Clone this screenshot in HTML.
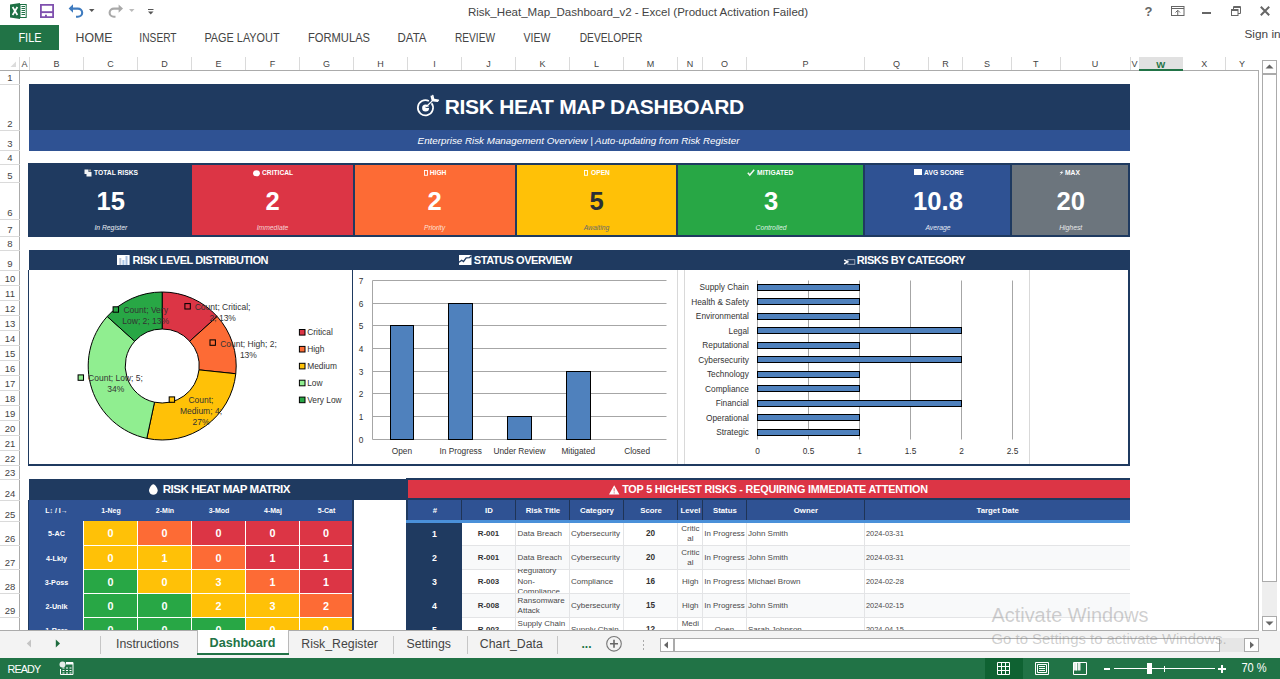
<!DOCTYPE html><html><head><meta charset="utf-8"><style>
*{margin:0;padding:0;box-sizing:border-box}
html,body{width:1280px;height:679px;overflow:hidden;background:#fff;font-family:"Liberation Sans",sans-serif}
.a{position:absolute}
.t{white-space:pre;line-height:1}
svg{position:absolute;overflow:visible}
</style></head><body>
<svg style="left:10px;top:3px" width="17" height="16" viewBox="0 0 17 16">
<path d="M0 1.5 L10 0 L10 16 L0 14.5 Z" fill="#1d7044"/>
<rect x="10" y="1.5" width="6.2" height="13" fill="#fff" stroke="#1d7044" stroke-width="1"/>
<path d="M11.5 3.5h3.5M11.5 5.5h3.5M11.5 7.5h3.5M11.5 9.5h3.5M11.5 11.5h3.5" stroke="#1d7044" stroke-width="1.1"/>
<path d="M2.6 4 L7.4 12 M7.4 4 L2.6 12" stroke="#fff" stroke-width="1.7"/>
</svg>
<svg style="left:40px;top:4px" width="14" height="14" viewBox="0 0 14 14">
<path d="M0.9 0.9 H13.1 V13.1 H0.9 Z" fill="none" stroke="#7f50ae" stroke-width="1.8"/>
<rect x="0" y="7.2" width="14" height="1.9" fill="#7f50ae"/>
<rect x="5" y="10.7" width="1.9" height="2.4" fill="#7f50ae"/>
</svg>
<svg style="left:68px;top:3px" width="16" height="15" viewBox="0 0 16 15">
<path d="M3 5.6 H9.8 A4.4 4.1 0 0 1 9.8 13.8 H8" fill="none" stroke="#3f7bbf" stroke-width="2.1"/>
<path d="M0.6 5.5 L5 1.3 L5 9.7 Z" fill="#3f7bbf"/>
</svg>
<svg style="left:89px;top:9px" width="6" height="4"><path d="M0 0h5.5l-2.75 3z" fill="#555"/></svg>
<svg style="left:108px;top:3px" width="16" height="15" viewBox="0 0 16 15">
<path d="M12.5 5.6 H6 A4.4 4.1 0 0 0 6 13.8 H7.5" fill="none" stroke="#a9a9a9" stroke-width="2.1"/>
<path d="M15 5.6 L10.6 1.4 L10.6 9.8 Z" fill="#a9a9a9"/>
</svg>
<svg style="left:129px;top:9px" width="6" height="4"><path d="M0 0h5.5l-2.75 3z" fill="#bbb"/></svg>
<svg style="left:148px;top:8px" width="6" height="8"><rect x="0" y="1" width="5.5" height="1" fill="#555"/><path d="M0 3.5h5.5l-2.75 3z" fill="#555"/></svg>
<div class="a t" style="top:7.42px;font-size:11.55px;color:#444;font-weight:normal;font-style:normal;left:238px;width:800px;text-align:center;">Risk_Heat_Map_Dashboard_v2 - Excel (Product Activation Failed)</div>
<div class="a t" style="top:5.00px;font-size:13px;color:#666;font-weight:bold;font-style:normal;left:748.5999999999999px;width:800px;text-align:center;">?</div>
<svg style="left:1171px;top:6px" width="14" height="10" viewBox="0 0 14 10">
<rect x="0.5" y="0.5" width="12.5" height="9" fill="none" stroke="#666" stroke-width="1"/>
<path d="M0.5 2.5h12.5" stroke="#666" stroke-width="1"/>
<path d="M6.75 9.5V4.5M4.5 6.5l2.25-2.25 2.25 2.25" fill="none" stroke="#666" stroke-width="1"/>
</svg>
<div class="a" style="left:1202px;top:12px;width:9px;height:2px;background:#666;"></div>
<svg style="left:1231px;top:6px" width="10" height="10" viewBox="0 0 10 10">
<rect x="0.5" y="3.5" width="6.5" height="6" fill="none" stroke="#666" stroke-width="1"/>
<path d="M2.5 3.5V0.5H9.5V7.5H7" fill="none" stroke="#666" stroke-width="1"/>
<path d="M0.5 4.5h6.5M2.5 1.5h7" stroke="#666" stroke-width="1"/>
</svg>
<svg style="left:1260px;top:6px" width="10" height="10" viewBox="0 0 10 10">
<path d="M0.8 0.8L9.2 9.2M9.2 0.8L0.8 9.2" stroke="#666" stroke-width="2"/>
</svg>
<div class="a" style="left:0px;top:25px;width:59px;height:24.5px;background:#217346;"></div>
<div class="a t" style="top:32.27px;font-size:12.2px;color:#fff;font-weight:normal;font-style:normal;left:-370.5px;width:800px;text-align:center;transform:scaleX(0.9);transform-origin:50% 50%;">FILE</div>
<div class="a t" style="top:32.27px;font-size:12.2px;color:#444;font-weight:normal;font-style:normal;left:-306.35px;width:800px;text-align:center;transform:scaleX(1.0088);transform-origin:50% 50%;">HOME</div>
<div class="a t" style="top:32.27px;font-size:12.2px;color:#444;font-weight:normal;font-style:normal;left:-242.0px;width:800px;text-align:center;transform:scaleX(0.8372);transform-origin:50% 50%;">INSERT</div>
<div class="a t" style="top:32.27px;font-size:12.2px;color:#444;font-weight:normal;font-style:normal;left:-157.65px;width:800px;text-align:center;transform:scaleX(0.8928);transform-origin:50% 50%;">PAGE LAYOUT</div>
<div class="a t" style="top:32.27px;font-size:12.2px;color:#444;font-weight:normal;font-style:normal;left:-61.35000000000002px;width:800px;text-align:center;transform:scaleX(0.9167);transform-origin:50% 50%;">FORMULAS</div>
<div class="a t" style="top:32.27px;font-size:12.2px;color:#444;font-weight:normal;font-style:normal;left:12.049999999999955px;width:800px;text-align:center;transform:scaleX(0.9414);transform-origin:50% 50%;">DATA</div>
<div class="a t" style="top:32.27px;font-size:12.2px;color:#444;font-weight:normal;font-style:normal;left:75.05000000000001px;width:800px;text-align:center;transform:scaleX(0.8319);transform-origin:50% 50%;">REVIEW</div>
<div class="a t" style="top:32.27px;font-size:12.2px;color:#444;font-weight:normal;font-style:normal;left:137.45000000000005px;width:800px;text-align:center;transform:scaleX(0.8613);transform-origin:50% 50%;">VIEW</div>
<div class="a t" style="top:32.27px;font-size:12.2px;color:#444;font-weight:normal;font-style:normal;left:211.04999999999995px;width:800px;text-align:center;transform:scaleX(0.8397);transform-origin:50% 50%;">DEVELOPER</div>
<div class="a t" style="top:29.01px;font-size:11.8px;color:#444;font-weight:normal;font-style:normal;left:1244.5px;">Sign in</div>
<div class="a" style="left:0px;top:70px;width:1258.5px;height:1px;background:#ababab;"></div>
<div class="a" style="left:19px;top:57px;width:1px;height:13px;background:#dadada;"></div>
<svg style="left:10px;top:61px" width="8" height="8"><path d="M6 0.5 L6 6 L0.5 6 Z" fill="#dcdcdc"/></svg>
<div class="a" style="left:29.0px;top:57px;width:1px;height:13px;background:#dadada;"></div>
<div class="a t" style="top:59.98px;font-size:9px;color:#444;font-weight:normal;font-style:normal;left:-375.5px;width:800px;text-align:center;">A</div>
<div class="a" style="left:83.0px;top:57px;width:1px;height:13px;background:#dadada;"></div>
<div class="a t" style="top:59.98px;font-size:9px;color:#444;font-weight:normal;font-style:normal;left:-343.5px;width:800px;text-align:center;">B</div>
<div class="a" style="left:137.0px;top:57px;width:1px;height:13px;background:#dadada;"></div>
<div class="a t" style="top:59.98px;font-size:9px;color:#444;font-weight:normal;font-style:normal;left:-289.5px;width:800px;text-align:center;">C</div>
<div class="a" style="left:191.0px;top:57px;width:1px;height:13px;background:#dadada;"></div>
<div class="a t" style="top:59.98px;font-size:9px;color:#444;font-weight:normal;font-style:normal;left:-235.5px;width:800px;text-align:center;">D</div>
<div class="a" style="left:245.0px;top:57px;width:1px;height:13px;background:#dadada;"></div>
<div class="a t" style="top:59.98px;font-size:9px;color:#444;font-weight:normal;font-style:normal;left:-181.5px;width:800px;text-align:center;">E</div>
<div class="a" style="left:299.0px;top:57px;width:1px;height:13px;background:#dadada;"></div>
<div class="a t" style="top:59.98px;font-size:9px;color:#444;font-weight:normal;font-style:normal;left:-127.5px;width:800px;text-align:center;">F</div>
<div class="a" style="left:353.0px;top:57px;width:1px;height:13px;background:#dadada;"></div>
<div class="a t" style="top:59.98px;font-size:9px;color:#444;font-weight:normal;font-style:normal;left:-73.5px;width:800px;text-align:center;">G</div>
<div class="a" style="left:407.0px;top:57px;width:1px;height:13px;background:#dadada;"></div>
<div class="a t" style="top:59.98px;font-size:9px;color:#444;font-weight:normal;font-style:normal;left:-19.5px;width:800px;text-align:center;">H</div>
<div class="a" style="left:461.0px;top:57px;width:1px;height:13px;background:#dadada;"></div>
<div class="a t" style="top:59.98px;font-size:9px;color:#444;font-weight:normal;font-style:normal;left:34.5px;width:800px;text-align:center;">I</div>
<div class="a" style="left:515.0px;top:57px;width:1px;height:13px;background:#dadada;"></div>
<div class="a t" style="top:59.98px;font-size:9px;color:#444;font-weight:normal;font-style:normal;left:88.5px;width:800px;text-align:center;">J</div>
<div class="a" style="left:569.0px;top:57px;width:1px;height:13px;background:#dadada;"></div>
<div class="a t" style="top:59.98px;font-size:9px;color:#444;font-weight:normal;font-style:normal;left:142.5px;width:800px;text-align:center;">K</div>
<div class="a" style="left:623.0px;top:57px;width:1px;height:13px;background:#dadada;"></div>
<div class="a t" style="top:59.98px;font-size:9px;color:#444;font-weight:normal;font-style:normal;left:196.5px;width:800px;text-align:center;">L</div>
<div class="a" style="left:677.0px;top:57px;width:1px;height:13px;background:#dadada;"></div>
<div class="a t" style="top:59.98px;font-size:9px;color:#444;font-weight:normal;font-style:normal;left:250.5px;width:800px;text-align:center;">M</div>
<div class="a" style="left:702.0px;top:57px;width:1px;height:13px;background:#dadada;"></div>
<div class="a t" style="top:59.98px;font-size:9px;color:#444;font-weight:normal;font-style:normal;left:290.0px;width:800px;text-align:center;">N</div>
<div class="a" style="left:746.0px;top:57px;width:1px;height:13px;background:#dadada;"></div>
<div class="a t" style="top:59.98px;font-size:9px;color:#444;font-weight:normal;font-style:normal;left:324.5px;width:800px;text-align:center;">O</div>
<div class="a" style="left:864.0px;top:57px;width:1px;height:13px;background:#dadada;"></div>
<div class="a t" style="top:59.98px;font-size:9px;color:#444;font-weight:normal;font-style:normal;left:405.5px;width:800px;text-align:center;">P</div>
<div class="a" style="left:928.0px;top:57px;width:1px;height:13px;background:#dadada;"></div>
<div class="a t" style="top:59.98px;font-size:9px;color:#444;font-weight:normal;font-style:normal;left:496.5px;width:800px;text-align:center;">Q</div>
<div class="a" style="left:961.9px;top:57px;width:1px;height:13px;background:#dadada;"></div>
<div class="a t" style="top:59.98px;font-size:9px;color:#444;font-weight:normal;font-style:normal;left:545.45px;width:800px;text-align:center;">R</div>
<div class="a" style="left:1010.9px;top:57px;width:1px;height:13px;background:#dadada;"></div>
<div class="a t" style="top:59.98px;font-size:9px;color:#444;font-weight:normal;font-style:normal;left:586.9px;width:800px;text-align:center;">S</div>
<div class="a" style="left:1059.7px;top:57px;width:1px;height:13px;background:#dadada;"></div>
<div class="a t" style="top:59.98px;font-size:9px;color:#444;font-weight:normal;font-style:normal;left:635.8px;width:800px;text-align:center;">T</div>
<div class="a" style="left:1129.5px;top:57px;width:1px;height:13px;background:#dadada;"></div>
<div class="a t" style="top:59.98px;font-size:9px;color:#444;font-weight:normal;font-style:normal;left:695.0999999999999px;width:800px;text-align:center;">U</div>
<div class="a" style="left:1138.5px;top:57px;width:1px;height:13px;background:#dadada;"></div>
<div class="a t" style="top:59.98px;font-size:9px;color:#444;font-weight:normal;font-style:normal;left:734.5px;width:800px;text-align:center;">V</div>
<div class="a" style="left:1182.2px;top:57px;width:1px;height:13px;background:#dadada;"></div>
<div class="a" style="left:1139px;top:57px;width:43.700000000000045px;height:13px;background:#e1e1e1;"></div>
<div class="a" style="left:1139px;top:68.5px;width:43.700000000000045px;height:2px;background:#217346;"></div>
<div class="a t" style="top:59.56px;font-size:9.5px;color:#217346;font-weight:bold;font-style:normal;left:760.8499999999999px;width:800px;text-align:center;">W</div>
<div class="a" style="left:1225.2px;top:57px;width:1px;height:13px;background:#dadada;"></div>
<div class="a t" style="top:59.98px;font-size:9px;color:#444;font-weight:normal;font-style:normal;left:804.2px;width:800px;text-align:center;">X</div>
<div class="a t" style="top:59.98px;font-size:9px;color:#444;font-weight:normal;font-style:normal;left:842.0999999999999px;width:800px;text-align:center;">Y</div>
<div class="a" style="left:19px;top:70px;width:1px;height:560.5px;background:#ababab;"></div>
<div class="a" style="left:0px;top:84.0px;width:19.5px;height:1px;background:#dadada;"></div>
<div class="a t" style="top:73.26px;font-size:9.5px;color:#444;font-weight:normal;font-style:normal;left:-390px;width:800px;text-align:center;">1</div>
<div class="a" style="left:0px;top:130.0px;width:19.5px;height:1px;background:#dadada;"></div>
<div class="a t" style="top:119.26px;font-size:9.5px;color:#444;font-weight:normal;font-style:normal;left:-390px;width:800px;text-align:center;">2</div>
<div class="a" style="left:0px;top:150.0px;width:19.5px;height:1px;background:#dadada;"></div>
<div class="a t" style="top:139.26px;font-size:9.5px;color:#444;font-weight:normal;font-style:normal;left:-390px;width:800px;text-align:center;">3</div>
<div class="a" style="left:0px;top:164.0px;width:19.5px;height:1px;background:#dadada;"></div>
<div class="a t" style="top:153.26px;font-size:9.5px;color:#444;font-weight:normal;font-style:normal;left:-390px;width:800px;text-align:center;">4</div>
<div class="a" style="left:0px;top:182.0px;width:19.5px;height:1px;background:#dadada;"></div>
<div class="a t" style="top:171.26px;font-size:9.5px;color:#444;font-weight:normal;font-style:normal;left:-390px;width:800px;text-align:center;">5</div>
<div class="a" style="left:0px;top:219.0px;width:19.5px;height:1px;background:#dadada;"></div>
<div class="a t" style="top:208.26px;font-size:9.5px;color:#444;font-weight:normal;font-style:normal;left:-390px;width:800px;text-align:center;">6</div>
<div class="a" style="left:0px;top:236.0px;width:19.5px;height:1px;background:#dadada;"></div>
<div class="a t" style="top:225.26px;font-size:9.5px;color:#444;font-weight:normal;font-style:normal;left:-390px;width:800px;text-align:center;">7</div>
<div class="a" style="left:0px;top:250.0px;width:19.5px;height:1px;background:#dadada;"></div>
<div class="a t" style="top:239.26px;font-size:9.5px;color:#444;font-weight:normal;font-style:normal;left:-390px;width:800px;text-align:center;">8</div>
<div class="a" style="left:0px;top:270.0px;width:19.5px;height:1px;background:#dadada;"></div>
<div class="a t" style="top:259.26px;font-size:9.5px;color:#444;font-weight:normal;font-style:normal;left:-390px;width:800px;text-align:center;">9</div>
<div class="a" style="left:0px;top:285.0px;width:19.5px;height:1px;background:#dadada;"></div>
<div class="a t" style="top:274.26px;font-size:9.5px;color:#444;font-weight:normal;font-style:normal;left:-390px;width:800px;text-align:center;">10</div>
<div class="a" style="left:0px;top:300.0px;width:19.5px;height:1px;background:#dadada;"></div>
<div class="a t" style="top:289.26px;font-size:9.5px;color:#444;font-weight:normal;font-style:normal;left:-390px;width:800px;text-align:center;">11</div>
<div class="a" style="left:0px;top:315.0px;width:19.5px;height:1px;background:#dadada;"></div>
<div class="a t" style="top:304.26px;font-size:9.5px;color:#444;font-weight:normal;font-style:normal;left:-390px;width:800px;text-align:center;">12</div>
<div class="a" style="left:0px;top:330.0px;width:19.5px;height:1px;background:#dadada;"></div>
<div class="a t" style="top:319.26px;font-size:9.5px;color:#444;font-weight:normal;font-style:normal;left:-390px;width:800px;text-align:center;">13</div>
<div class="a" style="left:0px;top:345.0px;width:19.5px;height:1px;background:#dadada;"></div>
<div class="a t" style="top:334.26px;font-size:9.5px;color:#444;font-weight:normal;font-style:normal;left:-390px;width:800px;text-align:center;">14</div>
<div class="a" style="left:0px;top:360.0px;width:19.5px;height:1px;background:#dadada;"></div>
<div class="a t" style="top:349.26px;font-size:9.5px;color:#444;font-weight:normal;font-style:normal;left:-390px;width:800px;text-align:center;">15</div>
<div class="a" style="left:0px;top:375.0px;width:19.5px;height:1px;background:#dadada;"></div>
<div class="a t" style="top:364.26px;font-size:9.5px;color:#444;font-weight:normal;font-style:normal;left:-390px;width:800px;text-align:center;">16</div>
<div class="a" style="left:0px;top:390.0px;width:19.5px;height:1px;background:#dadada;"></div>
<div class="a t" style="top:379.26px;font-size:9.5px;color:#444;font-weight:normal;font-style:normal;left:-390px;width:800px;text-align:center;">17</div>
<div class="a" style="left:0px;top:405.0px;width:19.5px;height:1px;background:#dadada;"></div>
<div class="a t" style="top:394.26px;font-size:9.5px;color:#444;font-weight:normal;font-style:normal;left:-390px;width:800px;text-align:center;">18</div>
<div class="a" style="left:0px;top:420.0px;width:19.5px;height:1px;background:#dadada;"></div>
<div class="a t" style="top:409.26px;font-size:9.5px;color:#444;font-weight:normal;font-style:normal;left:-390px;width:800px;text-align:center;">19</div>
<div class="a" style="left:0px;top:435.0px;width:19.5px;height:1px;background:#dadada;"></div>
<div class="a t" style="top:424.26px;font-size:9.5px;color:#444;font-weight:normal;font-style:normal;left:-390px;width:800px;text-align:center;">20</div>
<div class="a" style="left:0px;top:450.0px;width:19.5px;height:1px;background:#dadada;"></div>
<div class="a t" style="top:439.26px;font-size:9.5px;color:#444;font-weight:normal;font-style:normal;left:-390px;width:800px;text-align:center;">21</div>
<div class="a" style="left:0px;top:465.0px;width:19.5px;height:1px;background:#dadada;"></div>
<div class="a t" style="top:454.26px;font-size:9.5px;color:#444;font-weight:normal;font-style:normal;left:-390px;width:800px;text-align:center;">22</div>
<div class="a" style="left:0px;top:479.0px;width:19.5px;height:1px;background:#dadada;"></div>
<div class="a t" style="top:468.26px;font-size:9.5px;color:#444;font-weight:normal;font-style:normal;left:-390px;width:800px;text-align:center;">23</div>
<div class="a" style="left:0px;top:499.5px;width:19.5px;height:1px;background:#dadada;"></div>
<div class="a t" style="top:488.76px;font-size:9.5px;color:#444;font-weight:normal;font-style:normal;left:-390px;width:800px;text-align:center;">24</div>
<div class="a" style="left:0px;top:520.5px;width:19.5px;height:1px;background:#dadada;"></div>
<div class="a t" style="top:509.76px;font-size:9.5px;color:#444;font-weight:normal;font-style:normal;left:-390px;width:800px;text-align:center;">25</div>
<div class="a" style="left:0px;top:544.5px;width:19.5px;height:1px;background:#dadada;"></div>
<div class="a t" style="top:533.76px;font-size:9.5px;color:#444;font-weight:normal;font-style:normal;left:-390px;width:800px;text-align:center;">26</div>
<div class="a" style="left:0px;top:568.5px;width:19.5px;height:1px;background:#dadada;"></div>
<div class="a t" style="top:557.76px;font-size:9.5px;color:#444;font-weight:normal;font-style:normal;left:-390px;width:800px;text-align:center;">27</div>
<div class="a" style="left:0px;top:592.5px;width:19.5px;height:1px;background:#dadada;"></div>
<div class="a t" style="top:581.76px;font-size:9.5px;color:#444;font-weight:normal;font-style:normal;left:-390px;width:800px;text-align:center;">28</div>
<div class="a" style="left:0px;top:616.5px;width:19.5px;height:1px;background:#dadada;"></div>
<div class="a t" style="top:605.76px;font-size:9.5px;color:#444;font-weight:normal;font-style:normal;left:-390px;width:800px;text-align:center;">29</div>
<div class="a t" style="top:628.76px;font-size:9.5px;color:#444;font-weight:normal;font-style:normal;left:-390px;width:800px;text-align:center;">30</div>
<div class="a" style="left:1258px;top:70px;width:1px;height:561px;background:#ababab;"></div>
<div class="a" style="left:0px;top:630px;width:1259px;height:1px;background:#ababab;"></div>
<div class="a" style="left:1262px;top:581px;width:15px;height:36px;background:#eeeeee;"></div>
<div class="a" style="left:1262px;top:59.5px;width:15px;height:14px;background:#fff;border:1px solid #ababab;"></div>
<svg style="left:1265px;top:64px" width="9" height="5"><path d="M0.5 4.5 L4.5 0.5 L8.5 4.5 Z" fill="#666"/></svg>
<div class="a" style="left:1262px;top:74px;width:15px;height:508px;background:#fff;border:1px solid #ababab;"></div>
<div class="a" style="left:1262px;top:616px;width:15px;height:15px;background:#fff;border:1px solid #ababab;"></div>
<svg style="left:1265px;top:621px" width="9" height="5"><path d="M0.5 0.5 L8.5 0.5 L4.5 4.5 Z" fill="#666"/></svg>
<div class="a" style="left:0px;top:631px;width:1280px;height:27px;background:#f3f3f3;"></div>
<svg style="left:26px;top:639px" width="6" height="9"><path d="M5 0.5 L0.8 4.5 L5 8.5 Z" fill="#c4c4c4"/></svg>
<svg style="left:55px;top:639px" width="6" height="9"><path d="M0.8 0.5 L5 4.5 L0.8 8.5 Z" fill="#1e6b3e"/></svg>
<div class="a" style="left:100px;top:636px;width:1px;height:18px;background:#c6c6c6;"></div>
<div class="a t" style="top:637.59px;font-size:12.3px;color:#444;font-weight:normal;font-style:normal;left:-252.5px;width:800px;text-align:center;">Instructions</div>
<div class="a" style="left:197px;top:630px;width:91.5px;height:23px;background:#fff;"></div>
<div class="a" style="left:197px;top:653px;width:91.5px;height:2px;background:#217346;"></div>
<div class="a" style="left:197px;top:630px;width:1px;height:23px;background:#b9b9b9;"></div>
<div class="a" style="left:288px;top:630px;width:1px;height:23px;background:#b9b9b9;"></div>
<div class="a t" style="top:637.23px;font-size:12.6px;color:#217346;font-weight:bold;font-style:normal;left:-157.5px;width:800px;text-align:center;">Dashboard</div>
<div class="a t" style="top:637.59px;font-size:12.3px;color:#444;font-weight:normal;font-style:normal;left:-60.39999999999998px;width:800px;text-align:center;">Risk_Register</div>
<div class="a" style="left:392.5px;top:636px;width:1px;height:18px;background:#c6c6c6;"></div>
<div class="a t" style="top:637.59px;font-size:12.3px;color:#444;font-weight:normal;font-style:normal;left:28.69999999999999px;width:800px;text-align:center;">Settings</div>
<div class="a" style="left:466.5px;top:636px;width:1px;height:18px;background:#c6c6c6;"></div>
<div class="a t" style="top:637.59px;font-size:12.3px;color:#444;font-weight:normal;font-style:normal;left:111.30000000000001px;width:800px;text-align:center;">Chart_Data</div>
<div class="a" style="left:557px;top:636px;width:1px;height:18px;background:#c6c6c6;"></div>
<div class="a t" style="top:638.34px;font-size:12px;color:#217346;font-weight:bold;font-style:normal;left:186.5px;width:800px;text-align:center;">...</div>
<svg style="left:605px;top:635px" width="18" height="18"><circle cx="9" cy="8.8" r="7.3" fill="none" stroke="#777" stroke-width="1.1"/><path d="M9 4.8V12.8M5 8.8H13" stroke="#666" stroke-width="1.6"/></svg>
<div class="a" style="left:642.5px;top:640px;width:1.5px;height:1.5px;background:#aaa;"></div>
<div class="a" style="left:642.5px;top:644px;width:1.5px;height:1.5px;background:#aaa;"></div>
<div class="a" style="left:642.5px;top:648px;width:1.5px;height:1.5px;background:#aaa;"></div>
<div class="a" style="left:659.5px;top:637.5px;width:14.5px;height:14.5px;background:#fff;border:1px solid #ababab;"></div>
<svg style="left:663px;top:641px" width="6" height="8"><path d="M5 0.5 L1 4 L5 7.5 Z" fill="#666"/></svg>
<div class="a" style="left:673.5px;top:637.5px;width:546.5px;height:14.5px;background:#fff;border:1px solid #ababab;"></div>
<div class="a" style="left:1220px;top:637.5px;width:24px;height:14.5px;background:#e6e6e6;"></div>
<div class="a" style="left:1244px;top:637.5px;width:15px;height:14.5px;background:#fff;border:1px solid #ababab;"></div>
<svg style="left:1249px;top:641px" width="6" height="8"><path d="M1 0.5 L5 4 L1 7.5 Z" fill="#666"/></svg>
<div class="a" style="left:0px;top:658px;width:1280px;height:21px;background:#217346;"></div>
<div class="a t" style="top:664.16px;font-size:10.8px;color:#fff;font-weight:normal;font-style:normal;left:7.5px;letter-spacing:-0.9px;">READY</div>
<svg style="left:59px;top:661px" width="15" height="15" viewBox="0 0 15 15">
<circle cx="3.5" cy="3.5" r="3" fill="#e5ede8"/>
<path d="M7 1.5H14V13.5H1.5V8" fill="none" stroke="#fff" stroke-width="1"/>
<path d="M7 2.5H14" stroke="#fff" stroke-width="2"/>
<path d="M3.5 7h2M7 7h2M10.5 7h2M3.5 9.5h2M7 9.5h2M10.5 9.5h2M3.5 12h2M7 12h2M10.5 12h2" stroke="#fff" stroke-width="1"/>
</svg>
<div class="a" style="left:985px;top:658px;width:38px;height:21px;background:#0f6232;"></div>
<svg style="left:996px;top:661px" width="15" height="15" viewBox="0 0 15 15">
<path d="M1.5 1.5H13.5V13.5H1.5Z M1.5 5.5H13.5M1.5 9.5H13.5M5.5 1.5V13.5M9.5 1.5V13.5" fill="none" stroke="#fff" stroke-width="1"/>
</svg>
<svg style="left:1034px;top:661px" width="16" height="15" viewBox="0 0 16 15">
<path d="M1.5 1.5H14.5V13.5H1.5Z" fill="none" stroke="#fff" stroke-width="1"/>
<path d="M3.5 3.5H12.5V11.5H3.5Z" fill="none" stroke="#fff" stroke-width="1"/>
<path d="M5 5.5H11M5 7.5H11M5 9.5H11" stroke="#fff" stroke-width="1"/>
</svg>
<svg style="left:1072px;top:661px" width="16" height="15" viewBox="0 0 16 15">
<path d="M1.5 1.5H14.5V13.5H1.5Z" fill="none" stroke="#fff" stroke-width="1"/>
<rect x="2" y="2" width="2.5" height="7.5" fill="#e8eee9"/><rect x="5.5" y="2" width="3" height="7.5" fill="#e8eee9"/>
<path d="M4.5 2V9.5" stroke="#fff" stroke-width="1"/>
</svg>
<div class="a" style="left:1104px;top:668px;width:6px;height:1.6px;background:#fff;"></div>
<div class="a" style="left:1113.5px;top:668.2px;width:101px;height:1px;background:#fff;"></div>
<div class="a" style="left:1147px;top:663px;width:4.5px;height:11px;background:#fff;"></div>
<div class="a" style="left:1164px;top:665.5px;width:1px;height:6px;background:#fff;"></div>
<div class="a" style="left:1218px;top:668px;width:8px;height:1.8px;background:#fff;"></div>
<div class="a" style="left:1221.1px;top:664.5px;width:1.8px;height:8.5px;background:#fff;"></div>
<div class="a t" style="top:662.09px;font-size:12.3px;color:#fff;font-weight:normal;font-style:normal;left:854.3px;width:800px;text-align:center;transform:scaleX(0.9);transform-origin:50% 50%;">70 %</div>
<div class="a" style="left:0;top:0;width:1258px;height:630px;overflow:hidden">
<div class="a" style="left:29px;top:84px;width:1101px;height:45.5px;background:#1f3a60;"></div>
<div class="a" style="left:29px;top:129.5px;width:1101px;height:21px;background:#2f5293;"></div>
<svg style="left:410px;top:90px" width="35" height="30" viewBox="0 0 35 30">
<path d="M21.6 13.3 A7.6 7.6 0 1 1 18.9 11" fill="none" stroke="#fff" stroke-width="1.7"/>
<circle cx="15.6" cy="17.9" r="3.5" fill="#fff"/>
<path d="M15.6 17.9 L19 17.9 L19 16.6 L15.6 16.6Z" fill="#1f3a60"/>
<path d="M16.2 16.8 L23.6 9.6" stroke="#fff" stroke-width="1.3"/>
<path d="M22.3 10.2 L21.3 6.3 M23.6 9.4 L22.8 5.6 M23.4 10.8 L27.6 11.2 M24.4 9.6 L28.4 10.2" stroke="#fff" stroke-width="1.5" stroke-linecap="round"/>
</svg>
<div class="a t" style="top:96.42px;font-size:21px;color:#fff;font-weight:bold;font-style:normal;left:194.29999999999995px;width:800px;text-align:center;letter-spacing:-0.3px;">RISK HEAT MAP DASHBOARD</div>
<div class="a t" style="top:135.50px;font-size:9.8px;color:#fff;font-weight:normal;font-style:italic;left:178.5px;width:800px;text-align:center;">Enterprise Risk Management Overview | Auto-updating from Risk Register</div>
<div class="a" style="left:28px;top:163px;width:1102px;height:74px;background:#1f3a60;"></div>
<div class="a t" style="top:169.63px;font-size:6.7px;color:#fff;font-weight:bold;font-style:normal;left:94.1px;">TOTAL RISKS</div>
<div class="a t" style="top:188.93px;font-size:25.6px;color:#fff;font-weight:bold;font-style:normal;left:-289.2px;width:800px;text-align:center;">15</div>
<div class="a t" style="top:224.54px;font-size:6.8px;color:#e8ecf2;font-weight:normal;font-style:italic;left:-289.2px;width:800px;text-align:center;">In Register</div>
<div class="a" style="left:192px;top:165px;width:160.5px;height:70px;background:#dc3545;"></div>
<div class="a t" style="top:169.63px;font-size:6.7px;color:#fff;font-weight:bold;font-style:normal;left:262px;">CRITICAL</div>
<div class="a t" style="top:188.93px;font-size:25.6px;color:#fff;font-weight:bold;font-style:normal;left:-127.5px;width:800px;text-align:center;">2</div>
<div class="a t" style="top:224.54px;font-size:6.8px;color:#f6d4d7;font-weight:normal;font-style:italic;left:-127.5px;width:800px;text-align:center;">Immediate</div>
<div class="a" style="left:354.5px;top:165px;width:160.0px;height:70px;background:#fd6b35;"></div>
<div class="a t" style="top:169.63px;font-size:6.7px;color:#fff;font-weight:bold;font-style:normal;left:429.7px;">HIGH</div>
<div class="a t" style="top:188.93px;font-size:25.6px;color:#fff;font-weight:bold;font-style:normal;left:34.5px;width:800px;text-align:center;">2</div>
<div class="a t" style="top:224.54px;font-size:6.8px;color:#fde3d8;font-weight:normal;font-style:italic;left:34.5px;width:800px;text-align:center;">Priority</div>
<div class="a" style="left:516.5px;top:165px;width:159.70000000000005px;height:70px;background:#ffc107;"></div>
<div class="a t" style="top:169.63px;font-size:6.7px;color:#fff;font-weight:bold;font-style:normal;left:591px;">OPEN</div>
<div class="a t" style="top:188.93px;font-size:25.6px;color:#2b2f36;font-weight:bold;font-style:normal;left:196.5px;width:800px;text-align:center;">5</div>
<div class="a t" style="top:224.54px;font-size:6.8px;color:#6b6b6b;font-weight:normal;font-style:italic;left:196.5px;width:800px;text-align:center;">Awaiting</div>
<div class="a" style="left:678px;top:165px;width:185.20000000000005px;height:70px;background:#28a745;"></div>
<div class="a t" style="top:169.63px;font-size:6.7px;color:#fff;font-weight:bold;font-style:normal;left:757.1px;">MITIGATED</div>
<div class="a t" style="top:188.93px;font-size:25.6px;color:#fff;font-weight:bold;font-style:normal;left:371px;width:800px;text-align:center;">3</div>
<div class="a t" style="top:224.54px;font-size:6.8px;color:#dff1e3;font-weight:normal;font-style:italic;left:371px;width:800px;text-align:center;">Controlled</div>
<div class="a" style="left:864.8px;top:165px;width:145.60000000000002px;height:70px;background:#2f5293;"></div>
<div class="a t" style="top:169.63px;font-size:6.7px;color:#fff;font-weight:bold;font-style:normal;left:924.1px;">AVG SCORE</div>
<div class="a t" style="top:188.93px;font-size:25.6px;color:#fff;font-weight:bold;font-style:normal;left:538px;width:800px;text-align:center;">10.8</div>
<div class="a t" style="top:224.54px;font-size:6.8px;color:#e3e8f2;font-weight:normal;font-style:italic;left:538px;width:800px;text-align:center;">Average</div>
<div class="a" style="left:1012px;top:165px;width:116px;height:70px;background:#6c757d;"></div>
<div class="a t" style="top:169.63px;font-size:6.7px;color:#fff;font-weight:bold;font-style:normal;left:1065px;">MAX</div>
<div class="a t" style="top:188.93px;font-size:25.6px;color:#fff;font-weight:bold;font-style:normal;left:670.7px;width:800px;text-align:center;">20</div>
<div class="a t" style="top:224.54px;font-size:6.8px;color:#e8e9ea;font-weight:normal;font-style:italic;left:670.7px;width:800px;text-align:center;">Highest</div>
<svg style="left:84px;top:169px" width="8" height="8" viewBox="0 0 8 8">
<path d="M0.5 0.5H4.5V3H7.5V7.5H2.5V5H0.5Z" fill="#fff" opacity="0.95"/><path d="M5 0.5h2v2h-2z" fill="#e9c9a8" opacity="0.6"/>
</svg>
<svg style="left:253px;top:169.5px" width="7" height="6.5"><ellipse cx="3.5" cy="3.25" rx="3.4" ry="3.1" fill="#fff"/></svg>
<svg style="left:423.5px;top:170px" width="4" height="6"><rect x="0.5" y="0.5" width="3" height="4.8" fill="none" stroke="#fff" stroke-width="0.9"/></svg>
<svg style="left:584px;top:170px" width="4" height="6"><rect x="0.5" y="0.5" width="3" height="4.8" fill="none" stroke="#fff" stroke-width="0.9"/></svg>
<svg style="left:747px;top:169px" width="8" height="7"><path d="M0.8 3.8 L2.8 6 L7.2 0.8" fill="none" stroke="#f0f6f0" stroke-width="1.5"/></svg>
<div class="a" style="left:914px;top:169px;width:8px;height:6.2px;background:#fff;"></div>
<svg style="left:1059px;top:170px" width="5" height="5.5"><path d="M4.5 0 L0.5 3 L2.5 3 L0.5 5.5 L4.5 2.3 L2.5 2.3 Z" fill="#fff"/></svg>
<div class="a" style="left:29px;top:250px;width:1101px;height:20px;background:#1f3a60;"></div>
<div class="a t" style="top:254.69px;font-size:11px;color:#fff;font-weight:bold;font-style:normal;left:-199.7px;width:800px;text-align:center;letter-spacing:-0.45px;">RISK LEVEL DISTRIBUTION</div>
<div class="a t" style="top:254.69px;font-size:11px;color:#fff;font-weight:bold;font-style:normal;left:122.70000000000005px;width:800px;text-align:center;letter-spacing:-0.45px;">STATUS OVERVIEW</div>
<div class="a t" style="top:254.69px;font-size:11px;color:#fff;font-weight:bold;font-style:normal;left:511px;width:800px;text-align:center;letter-spacing:-0.45px;">RISKS BY CATEGORY</div>
<svg style="left:116.5px;top:255px" width="13" height="10" viewBox="0 0 13 10">
<rect x="0" y="0" width="12.6" height="10" fill="#fff"/>
<rect x="2.3" y="3" width="2" height="7" fill="#b9c3d6"/><rect x="5.4" y="5" width="2" height="5" fill="#a9c6e6"/><rect x="8.5" y="1" width="2" height="9" fill="#a7bfe0"/>
</svg>
<svg style="left:458.8px;top:255px" width="13" height="10" viewBox="0 0 13 10">
<rect x="0" y="0" width="12.5" height="10" fill="#fff"/>
<path d="M0 7.3 L2.7 5.3 L4.5 6.5 L7.2 2.8 L10.5 2.6 L12.5 0.8" fill="none" stroke="#1f3a60" stroke-width="1.3"/>
</svg>
<svg style="left:843px;top:258.5px" width="13" height="6" viewBox="0 0 13 6">
<rect x="4.8" y="0.7" width="7" height="4.6" fill="none" stroke="#aab3c4" stroke-width="0.9"/>
<path d="M1.2 0.8 L4.6 2.8 L1.2 5" fill="none" stroke="#fff" stroke-width="1.5"/>
</svg>
<div class="a" style="left:28px;top:270px;width:1px;height:195px;background:#1f3a60;"></div>
<div class="a" style="left:352px;top:270px;width:1.2px;height:195px;background:#1f3a60;"></div>
<div class="a" style="left:1128px;top:270px;width:2px;height:195.5px;background:#1f3a60;"></div>
<div class="a" style="left:28px;top:464px;width:1102px;height:2px;background:#1f3a60;"></div>
<div class="a" style="left:677.2px;top:270px;width:1px;height:193.5px;background:#d9d9d9;"></div>
<div class="a" style="left:684px;top:270px;width:1px;height:193.5px;background:#d9d9d9;"></div>
<div class="a" style="left:1029px;top:270px;width:1px;height:193.5px;background:#d9d9d9;"></div>
<svg style="left:0;top:0" width="1280" height="679" viewBox="0 0 1280 679" font-family="Liberation Sans, sans-serif">
<path d="M162.20 292.00 A74 74 0 0 1 217.19 316.48 L189.70 341.24 A37 37 0 0 0 162.20 329.00 Z" fill="#dc3545" stroke="#000" stroke-width="1"/>
<path d="M217.19 316.48 A74 74 0 0 1 235.79 373.74 L199.00 369.87 A37 37 0 0 0 189.70 341.24 Z" fill="#fd6b35" stroke="#000" stroke-width="1"/>
<path d="M235.79 373.74 A74 74 0 0 1 146.81 438.38 L154.51 402.19 A37 37 0 0 0 199.00 369.87 Z" fill="#ffc107" stroke="#000" stroke-width="1"/>
<path d="M146.81 438.38 A74 74 0 0 1 107.21 316.48 L134.70 341.24 A37 37 0 0 0 154.51 402.19 Z" fill="#90ee90" stroke="#000" stroke-width="1"/>
<path d="M107.21 316.48 A74 74 0 0 1 162.20 292.00 L162.20 329.00 A37 37 0 0 0 134.70 341.24 Z" fill="#28a745" stroke="#000" stroke-width="1"/>
<rect x="113.1" y="306.8" width="5.4" height="5.4" fill="#28a745" stroke="#000" stroke-width="1.05"/>
<rect x="184.9" y="303.6" width="5.4" height="5.4" fill="#dc3545" stroke="#000" stroke-width="1.05"/>
<rect x="210.0" y="339.90000000000003" width="5.4" height="5.4" fill="#fd6b35" stroke="#000" stroke-width="1.05"/>
<rect x="78.1" y="374.90000000000003" width="5.4" height="5.4" fill="#90ee90" stroke="#000" stroke-width="1.05"/>
<rect x="169.20000000000002" y="396.90000000000003" width="5.4" height="5.4" fill="#ffc107" stroke="#000" stroke-width="1.05"/>
<text x="145.7" y="313.2" font-size="8.5" fill="#333333" text-anchor="middle" >Count; Very</text>
<text x="145.7" y="324.3" font-size="8.5" fill="#333333" text-anchor="middle" >Low; 2; 13%</text>
<text x="222.6" y="310.3" font-size="8.5" fill="#333333" text-anchor="middle" >Count; Critical;</text>
<text x="222.7" y="321.3" font-size="8.5" fill="#333333" text-anchor="middle" >2; 13%</text>
<text x="248.5" y="346.7" font-size="8.5" fill="#333333" text-anchor="middle" >Count; High; 2;</text>
<text x="248.4" y="357.7" font-size="8.5" fill="#333333" text-anchor="middle" >13%</text>
<text x="115.5" y="381" font-size="8.5" fill="#333333" text-anchor="middle" >Count; Low; 5;</text>
<text x="115.7" y="392" font-size="8.5" fill="#333333" text-anchor="middle" >34%</text>
<text x="200.9" y="402.8" font-size="8.5" fill="#333333" text-anchor="middle" >Count;</text>
<text x="201" y="413.8" font-size="8.5" fill="#333333" text-anchor="middle" >Medium; 4;</text>
<text x="201" y="424.8" font-size="8.5" fill="#333333" text-anchor="middle" >27%</text>
<rect x="299.4" y="329.5" width="5.6" height="5.6" fill="#dc3545" stroke="#000" stroke-width="1"/>
<text x="307.2" y="335.40000000000003" font-size="8.4" fill="#333333" text-anchor="start" >Critical</text>
<rect x="299.4" y="346.4" width="5.6" height="5.6" fill="#fd6b35" stroke="#000" stroke-width="1"/>
<text x="307.2" y="352.3" font-size="8.4" fill="#333333" text-anchor="start" >High</text>
<rect x="299.4" y="363.3" width="5.6" height="5.6" fill="#ffc107" stroke="#000" stroke-width="1"/>
<text x="307.2" y="369.20000000000005" font-size="8.4" fill="#333333" text-anchor="start" >Medium</text>
<rect x="299.4" y="380.2" width="5.6" height="5.6" fill="#90ee90" stroke="#000" stroke-width="1"/>
<text x="307.2" y="386.1" font-size="8.4" fill="#333333" text-anchor="start" >Low</text>
<rect x="299.4" y="397.09999999999997" width="5.6" height="5.6" fill="#28a745" stroke="#000" stroke-width="1"/>
<text x="307.2" y="403.0" font-size="8.4" fill="#333333" text-anchor="start" >Very Low</text>
<line x1="372.5" y1="439.5" x2="666.5" y2="439.5" stroke="#a6a6a6" stroke-width="1"/>
<text x="361" y="442.5" font-size="8.3" fill="#333333" text-anchor="middle" >0</text>
<line x1="372.5" y1="416.5" x2="666.5" y2="416.5" stroke="#a6a6a6" stroke-width="1"/>
<text x="361" y="419.5" font-size="8.3" fill="#333333" text-anchor="middle" >1</text>
<line x1="372.5" y1="393.5" x2="666.5" y2="393.5" stroke="#a6a6a6" stroke-width="1"/>
<text x="361" y="396.5" font-size="8.3" fill="#333333" text-anchor="middle" >2</text>
<line x1="372.5" y1="371.5" x2="666.5" y2="371.5" stroke="#a6a6a6" stroke-width="1"/>
<text x="361" y="374.5" font-size="8.3" fill="#333333" text-anchor="middle" >3</text>
<line x1="372.5" y1="348.5" x2="666.5" y2="348.5" stroke="#a6a6a6" stroke-width="1"/>
<text x="361" y="351.5" font-size="8.3" fill="#333333" text-anchor="middle" >4</text>
<line x1="372.5" y1="325.5" x2="666.5" y2="325.5" stroke="#a6a6a6" stroke-width="1"/>
<text x="361" y="328.5" font-size="8.3" fill="#333333" text-anchor="middle" >5</text>
<line x1="372.5" y1="303.5" x2="666.5" y2="303.5" stroke="#a6a6a6" stroke-width="1"/>
<text x="361" y="306.5" font-size="8.3" fill="#333333" text-anchor="middle" >6</text>
<line x1="372.5" y1="280.5" x2="666.5" y2="280.5" stroke="#a6a6a6" stroke-width="1"/>
<text x="361" y="283.5" font-size="8.3" fill="#333333" text-anchor="middle" >7</text>
<line x1="372.5" y1="280.5" x2="372.5" y2="439.5" stroke="#a6a6a6" stroke-width="1"/>
<rect x="390.5" y="325.5" width="23.0" height="114" fill="#4f81bd" stroke="#000" stroke-width="1"/>
<text x="401.9" y="454" font-size="8.3" fill="#333333" text-anchor="middle" >Open</text>
<rect x="448.5" y="303.5" width="24.0" height="136" fill="#4f81bd" stroke="#000" stroke-width="1"/>
<text x="460.7" y="454" font-size="8.3" fill="#333333" text-anchor="middle" >In Progress</text>
<rect x="507.5" y="416.5" width="24.0" height="23" fill="#4f81bd" stroke="#000" stroke-width="1"/>
<text x="519.5" y="454" font-size="8.3" fill="#333333" text-anchor="middle" >Under Review</text>
<rect x="566.5" y="371.5" width="24.0" height="68" fill="#4f81bd" stroke="#000" stroke-width="1"/>
<text x="578.3" y="454" font-size="8.3" fill="#333333" text-anchor="middle" >Mitigated</text>
<text x="637.1" y="454" font-size="8.3" fill="#333333" text-anchor="middle" >Closed</text>
<line x1="757.5" y1="280.5" x2="757.5" y2="439.5" stroke="#a6a6a6" stroke-width="1"/>
<text x="757.5" y="454" font-size="8.3" fill="#333333" text-anchor="middle" >0</text>
<line x1="808.5" y1="280.5" x2="808.5" y2="439.5" stroke="#a6a6a6" stroke-width="1"/>
<text x="808.5" y="454" font-size="8.3" fill="#333333" text-anchor="middle" >0.5</text>
<line x1="859.5" y1="280.5" x2="859.5" y2="439.5" stroke="#a6a6a6" stroke-width="1"/>
<text x="859.5" y="454" font-size="8.3" fill="#333333" text-anchor="middle" >1</text>
<line x1="910.5" y1="280.5" x2="910.5" y2="439.5" stroke="#a6a6a6" stroke-width="1"/>
<text x="910.5" y="454" font-size="8.3" fill="#333333" text-anchor="middle" >1.5</text>
<line x1="961.5" y1="280.5" x2="961.5" y2="439.5" stroke="#a6a6a6" stroke-width="1"/>
<text x="961.5" y="454" font-size="8.3" fill="#333333" text-anchor="middle" >2</text>
<line x1="1012.5" y1="280.5" x2="1012.5" y2="439.5" stroke="#a6a6a6" stroke-width="1"/>
<text x="1012.5" y="454" font-size="8.3" fill="#333333" text-anchor="middle" >2.5</text>
<rect x="757.5" y="284.5" width="102" height="6" fill="#4f81bd" stroke="#000" stroke-width="1"/>
<text x="748.9" y="290.2" font-size="8.3" fill="#333333" text-anchor="end" >Supply Chain</text>
<rect x="757.5" y="298.5" width="102" height="6" fill="#4f81bd" stroke="#000" stroke-width="1"/>
<text x="748.9" y="304.7" font-size="8.3" fill="#333333" text-anchor="end" >Health &amp; Safety</text>
<rect x="757.5" y="313.5" width="102" height="6" fill="#4f81bd" stroke="#000" stroke-width="1"/>
<text x="748.9" y="319.2" font-size="8.3" fill="#333333" text-anchor="end" >Environmental</text>
<rect x="757.5" y="327.5" width="204" height="6" fill="#4f81bd" stroke="#000" stroke-width="1"/>
<text x="748.9" y="333.7" font-size="8.3" fill="#333333" text-anchor="end" >Legal</text>
<rect x="757.5" y="342.5" width="102" height="6" fill="#4f81bd" stroke="#000" stroke-width="1"/>
<text x="748.9" y="348.2" font-size="8.3" fill="#333333" text-anchor="end" >Reputational</text>
<rect x="757.5" y="356.5" width="204" height="6" fill="#4f81bd" stroke="#000" stroke-width="1"/>
<text x="748.9" y="362.7" font-size="8.3" fill="#333333" text-anchor="end" >Cybersecurity</text>
<rect x="757.5" y="371.5" width="102" height="6" fill="#4f81bd" stroke="#000" stroke-width="1"/>
<text x="748.9" y="377.2" font-size="8.3" fill="#333333" text-anchor="end" >Technology</text>
<rect x="757.5" y="385.5" width="102" height="6" fill="#4f81bd" stroke="#000" stroke-width="1"/>
<text x="748.9" y="391.7" font-size="8.3" fill="#333333" text-anchor="end" >Compliance</text>
<rect x="757.5" y="400.5" width="204" height="6" fill="#4f81bd" stroke="#000" stroke-width="1"/>
<text x="748.9" y="406.2" font-size="8.3" fill="#333333" text-anchor="end" >Financial</text>
<rect x="757.5" y="414.5" width="102" height="6" fill="#4f81bd" stroke="#000" stroke-width="1"/>
<text x="748.9" y="420.7" font-size="8.3" fill="#333333" text-anchor="end" >Operational</text>
<rect x="757.5" y="429.5" width="102" height="6" fill="#4f81bd" stroke="#000" stroke-width="1"/>
<text x="748.9" y="435.2" font-size="8.3" fill="#333333" text-anchor="end" >Strategic</text>
</svg>
<div class="a" style="left:29px;top:479px;width:377px;height:20.5px;background:#1f3a60;"></div>
<svg style="left:148.6px;top:483.6px" width="9" height="11" viewBox="0 0 9 11">
<path d="M4.3 0.2 C6.3 0.6 8.7 4.3 8.7 6.6 A4.35 4.1 0 0 1 0 6.6 C0 4.3 2.3 0.6 4.3 0.2Z" fill="#fff"/>
</svg>
<div class="a t" style="top:483.28px;font-size:11.6px;color:#fff;font-weight:bold;font-style:normal;left:-173.6px;width:800px;text-align:center;letter-spacing:-0.49px;">RISK HEAT MAP MATRIX</div>
<div class="a" style="left:28px;top:499.5px;width:326px;height:131px;background:#1f3a60;"></div>
<div class="a" style="left:29px;top:499.5px;width:323px;height:131px;background:#2f5293;"></div>
<div class="a t" style="top:507.27px;font-size:7px;color:#fff;font-weight:bold;font-style:normal;left:-343.5px;width:800px;text-align:center;">L↕ / I→</div>
<div class="a t" style="top:507.27px;font-size:7px;color:#fff;font-weight:bold;font-style:normal;left:-289.0px;width:800px;text-align:center;">1-Neg</div>
<div class="a t" style="top:507.27px;font-size:7px;color:#fff;font-weight:bold;font-style:normal;left:-235.0px;width:800px;text-align:center;">2-Min</div>
<div class="a t" style="top:507.27px;font-size:7px;color:#fff;font-weight:bold;font-style:normal;left:-181.0px;width:800px;text-align:center;">3-Mod</div>
<div class="a t" style="top:507.27px;font-size:7px;color:#fff;font-weight:bold;font-style:normal;left:-127.0px;width:800px;text-align:center;">4-Maj</div>
<div class="a t" style="top:507.27px;font-size:7px;color:#fff;font-weight:bold;font-style:normal;left:-73.5px;width:800px;text-align:center;">5-Cat</div>
<div class="a" style="left:83px;top:520.5px;width:269px;height:110px;background:#fff;"></div>
<div class="a t" style="top:530.01px;font-size:7.2px;color:#fff;font-weight:bold;font-style:normal;left:-343.5px;width:800px;text-align:center;">5-AC</div>
<div class="a" style="left:84px;top:521px;width:53px;height:24px;background:#ffc107;"></div>
<div class="a t" style="top:528.06px;font-size:10.8px;color:#fff;font-weight:bold;font-style:normal;left:-289.5px;width:800px;text-align:center;">0</div>
<div class="a" style="left:138px;top:521px;width:53px;height:24px;background:#fd6b35;"></div>
<div class="a t" style="top:528.06px;font-size:10.8px;color:#fff;font-weight:bold;font-style:normal;left:-235.5px;width:800px;text-align:center;">0</div>
<div class="a" style="left:192px;top:521px;width:53px;height:24px;background:#dc3545;"></div>
<div class="a t" style="top:528.06px;font-size:10.8px;color:#fff;font-weight:bold;font-style:normal;left:-181.5px;width:800px;text-align:center;">0</div>
<div class="a" style="left:246px;top:521px;width:53px;height:24px;background:#dc3545;"></div>
<div class="a t" style="top:528.06px;font-size:10.8px;color:#fff;font-weight:bold;font-style:normal;left:-127.5px;width:800px;text-align:center;">0</div>
<div class="a" style="left:300px;top:521px;width:52px;height:24px;background:#dc3545;"></div>
<div class="a t" style="top:528.06px;font-size:10.8px;color:#fff;font-weight:bold;font-style:normal;left:-74.0px;width:800px;text-align:center;">0</div>
<div class="a t" style="top:554.51px;font-size:7.2px;color:#fff;font-weight:bold;font-style:normal;left:-343.5px;width:800px;text-align:center;">4-Lkly</div>
<div class="a" style="left:84px;top:546px;width:53px;height:23px;background:#ffc107;"></div>
<div class="a t" style="top:552.56px;font-size:10.8px;color:#fff;font-weight:bold;font-style:normal;left:-289.5px;width:800px;text-align:center;">0</div>
<div class="a" style="left:138px;top:546px;width:53px;height:23px;background:#ffc107;"></div>
<div class="a t" style="top:552.56px;font-size:10.8px;color:#fff;font-weight:bold;font-style:normal;left:-235.5px;width:800px;text-align:center;">1</div>
<div class="a" style="left:192px;top:546px;width:53px;height:23px;background:#fd6b35;"></div>
<div class="a t" style="top:552.56px;font-size:10.8px;color:#fff;font-weight:bold;font-style:normal;left:-181.5px;width:800px;text-align:center;">0</div>
<div class="a" style="left:246px;top:546px;width:53px;height:23px;background:#dc3545;"></div>
<div class="a t" style="top:552.56px;font-size:10.8px;color:#fff;font-weight:bold;font-style:normal;left:-127.5px;width:800px;text-align:center;">1</div>
<div class="a" style="left:300px;top:546px;width:52px;height:23px;background:#dc3545;"></div>
<div class="a t" style="top:552.56px;font-size:10.8px;color:#fff;font-weight:bold;font-style:normal;left:-74.0px;width:800px;text-align:center;">1</div>
<div class="a t" style="top:578.51px;font-size:7.2px;color:#fff;font-weight:bold;font-style:normal;left:-343.5px;width:800px;text-align:center;">3-Poss</div>
<div class="a" style="left:84px;top:570px;width:53px;height:23px;background:#28a745;"></div>
<div class="a t" style="top:576.56px;font-size:10.8px;color:#fff;font-weight:bold;font-style:normal;left:-289.5px;width:800px;text-align:center;">0</div>
<div class="a" style="left:138px;top:570px;width:53px;height:23px;background:#ffc107;"></div>
<div class="a t" style="top:576.56px;font-size:10.8px;color:#fff;font-weight:bold;font-style:normal;left:-235.5px;width:800px;text-align:center;">0</div>
<div class="a" style="left:192px;top:570px;width:53px;height:23px;background:#ffc107;"></div>
<div class="a t" style="top:576.56px;font-size:10.8px;color:#fff;font-weight:bold;font-style:normal;left:-181.5px;width:800px;text-align:center;">3</div>
<div class="a" style="left:246px;top:570px;width:53px;height:23px;background:#fd6b35;"></div>
<div class="a t" style="top:576.56px;font-size:10.8px;color:#fff;font-weight:bold;font-style:normal;left:-127.5px;width:800px;text-align:center;">1</div>
<div class="a" style="left:300px;top:570px;width:52px;height:23px;background:#dc3545;"></div>
<div class="a t" style="top:576.56px;font-size:10.8px;color:#fff;font-weight:bold;font-style:normal;left:-74.0px;width:800px;text-align:center;">1</div>
<div class="a t" style="top:602.51px;font-size:7.2px;color:#fff;font-weight:bold;font-style:normal;left:-343.5px;width:800px;text-align:center;">2-Unlk</div>
<div class="a" style="left:84px;top:594px;width:53px;height:23px;background:#28a745;"></div>
<div class="a t" style="top:600.56px;font-size:10.8px;color:#fff;font-weight:bold;font-style:normal;left:-289.5px;width:800px;text-align:center;">0</div>
<div class="a" style="left:138px;top:594px;width:53px;height:23px;background:#28a745;"></div>
<div class="a t" style="top:600.56px;font-size:10.8px;color:#fff;font-weight:bold;font-style:normal;left:-235.5px;width:800px;text-align:center;">0</div>
<div class="a" style="left:192px;top:594px;width:53px;height:23px;background:#ffc107;"></div>
<div class="a t" style="top:600.56px;font-size:10.8px;color:#fff;font-weight:bold;font-style:normal;left:-181.5px;width:800px;text-align:center;">2</div>
<div class="a" style="left:246px;top:594px;width:53px;height:23px;background:#ffc107;"></div>
<div class="a t" style="top:600.56px;font-size:10.8px;color:#fff;font-weight:bold;font-style:normal;left:-127.5px;width:800px;text-align:center;">3</div>
<div class="a" style="left:300px;top:594px;width:52px;height:23px;background:#fd6b35;"></div>
<div class="a t" style="top:600.56px;font-size:10.8px;color:#fff;font-weight:bold;font-style:normal;left:-74.0px;width:800px;text-align:center;">2</div>
<div class="a t" style="top:626.51px;font-size:7.2px;color:#fff;font-weight:bold;font-style:normal;left:-343.5px;width:800px;text-align:center;">1-Rare</div>
<div class="a" style="left:84px;top:618px;width:53px;height:12px;background:#28a745;"></div>
<div class="a t" style="top:624.56px;font-size:10.8px;color:#fff;font-weight:bold;font-style:normal;left:-289.5px;width:800px;text-align:center;">0</div>
<div class="a" style="left:138px;top:618px;width:53px;height:12px;background:#28a745;"></div>
<div class="a t" style="top:624.56px;font-size:10.8px;color:#fff;font-weight:bold;font-style:normal;left:-235.5px;width:800px;text-align:center;">0</div>
<div class="a" style="left:192px;top:618px;width:53px;height:12px;background:#28a745;"></div>
<div class="a t" style="top:624.56px;font-size:10.8px;color:#fff;font-weight:bold;font-style:normal;left:-181.5px;width:800px;text-align:center;">0</div>
<div class="a" style="left:246px;top:618px;width:53px;height:12px;background:#ffc107;"></div>
<div class="a t" style="top:624.56px;font-size:10.8px;color:#fff;font-weight:bold;font-style:normal;left:-127.5px;width:800px;text-align:center;">0</div>
<div class="a" style="left:300px;top:618px;width:52px;height:12px;background:#ffc107;"></div>
<div class="a t" style="top:624.56px;font-size:10.8px;color:#fff;font-weight:bold;font-style:normal;left:-74.0px;width:800px;text-align:center;">0</div>
<div class="a" style="left:406px;top:478px;width:724px;height:2px;background:#1f3a60;"></div>
<div class="a" style="left:406px;top:478px;width:2px;height:152px;background:#1f3a60;"></div>
<div class="a" style="left:408px;top:480px;width:722px;height:18px;background:#dc3545;"></div>
<div class="a" style="left:408px;top:498px;width:722px;height:2px;background:#1f3a60;"></div>
<svg style="left:609px;top:484.5px" width="11" height="10" viewBox="0 0 11 10">
<path d="M5.2 0.3 L10.4 9.4 L0 9.4 Z" fill="#fff"/>
<path d="M5.2 3.3V6.4M5.2 7.3V8.4" stroke="#e88a94" stroke-width="1.2"/>
</svg>
<div class="a t" style="top:484.46px;font-size:10.8px;color:#fff;font-weight:bold;font-style:normal;left:375px;width:800px;text-align:center;letter-spacing:-0.18px;">TOP 5 HIGHEST RISKS - REQUIRING IMMEDIATE ATTENTION</div>
<div class="a" style="left:408px;top:500px;width:722px;height:20px;background:#2f5293;"></div>
<div class="a" style="left:406px;top:520px;width:724px;height:3px;background:#4a90d9;"></div>
<div class="a t" style="top:506.80px;font-size:7.8px;color:#fff;font-weight:bold;font-style:normal;left:34.94999999999999px;width:800px;text-align:center;">#</div>
<div class="a t" style="top:506.80px;font-size:7.8px;color:#fff;font-weight:bold;font-style:normal;left:88.94999999999999px;width:800px;text-align:center;">ID</div>
<div class="a t" style="top:506.80px;font-size:7.8px;color:#fff;font-weight:bold;font-style:normal;left:142.95000000000005px;width:800px;text-align:center;">Risk Title</div>
<div class="a t" style="top:506.80px;font-size:7.8px;color:#fff;font-weight:bold;font-style:normal;left:196.95000000000005px;width:800px;text-align:center;">Category</div>
<div class="a t" style="top:506.80px;font-size:7.8px;color:#fff;font-weight:bold;font-style:normal;left:251.04999999999995px;width:800px;text-align:center;">Score</div>
<div class="a t" style="top:506.80px;font-size:7.8px;color:#fff;font-weight:bold;font-style:normal;left:290.5px;width:800px;text-align:center;">Level</div>
<div class="a t" style="top:506.80px;font-size:7.8px;color:#fff;font-weight:bold;font-style:normal;left:324.9px;width:800px;text-align:center;">Status</div>
<div class="a t" style="top:506.80px;font-size:7.8px;color:#fff;font-weight:bold;font-style:normal;left:405.9px;width:800px;text-align:center;">Owner</div>
<div class="a t" style="top:506.80px;font-size:7.8px;color:#fff;font-weight:bold;font-style:normal;left:597.7px;width:800px;text-align:center;">Target Date</div>
<div class="a" style="left:461px;top:500px;width:1px;height:20px;background:#1f3456;"></div>
<div class="a" style="left:515px;top:500px;width:1px;height:20px;background:#1f3456;"></div>
<div class="a" style="left:569px;top:500px;width:1px;height:20px;background:#1f3456;"></div>
<div class="a" style="left:623px;top:500px;width:1px;height:20px;background:#1f3456;"></div>
<div class="a" style="left:677px;top:500px;width:1px;height:20px;background:#1f3456;"></div>
<div class="a" style="left:702px;top:500px;width:1px;height:20px;background:#1f3456;"></div>
<div class="a" style="left:746px;top:500px;width:1px;height:20px;background:#1f3456;"></div>
<div class="a" style="left:864px;top:500px;width:1px;height:20px;background:#1f3456;"></div>
<div class="a" style="left:461.5px;top:523px;width:668.5px;height:22px;background:#ffffff;"></div>
<div class="a" style="left:461.5px;top:545px;width:668.5px;height:24px;background:#f8f9fa;"></div>
<div class="a" style="left:461.5px;top:544.5px;width:668.5px;height:1px;background:#e3e4e6;"></div>
<div class="a" style="left:461.5px;top:569px;width:668.5px;height:24px;background:#ffffff;"></div>
<div class="a" style="left:461.5px;top:568.5px;width:668.5px;height:1px;background:#e3e4e6;"></div>
<div class="a" style="left:461.5px;top:593px;width:668.5px;height:24px;background:#f8f9fa;"></div>
<div class="a" style="left:461.5px;top:592.5px;width:668.5px;height:1px;background:#e3e4e6;"></div>
<div class="a" style="left:461.5px;top:617px;width:668.5px;height:13px;background:#ffffff;"></div>
<div class="a" style="left:461.5px;top:616.5px;width:668.5px;height:1px;background:#e3e4e6;"></div>
<div class="a" style="left:408px;top:522.7px;width:53.5px;height:107.3px;background:#1f3a60;"></div>
<div class="a" style="left:515px;top:522.7px;width:1px;height:107.3px;background:#e3e4e6;"></div>
<div class="a" style="left:569px;top:522.7px;width:1px;height:107.3px;background:#e3e4e6;"></div>
<div class="a" style="left:623px;top:522.7px;width:1px;height:107.3px;background:#e3e4e6;"></div>
<div class="a" style="left:677px;top:522.7px;width:1px;height:107.3px;background:#e3e4e6;"></div>
<div class="a" style="left:702px;top:522.7px;width:1px;height:107.3px;background:#e3e4e6;"></div>
<div class="a" style="left:746px;top:522.7px;width:1px;height:107.3px;background:#e3e4e6;"></div>
<div class="a" style="left:864px;top:522.7px;width:1px;height:107.3px;background:#e3e4e6;"></div>
<div class="a t" style="top:529.65px;font-size:8.8px;color:#fff;font-weight:bold;font-style:normal;left:34.5px;width:800px;text-align:center;">1</div>
<div class="a t" style="top:529.91px;font-size:7.9px;color:#333;font-weight:bold;font-style:normal;left:88.5px;width:800px;text-align:center;">R-001</div>
<div class="a" style="left:516px;top:521px;width:53px;height:24px;overflow:hidden">
<div class="a t" style="top:8.83px;font-size:8px;color:#4a4a4a;font-weight:normal;font-style:normal;left:1.6px;">Data Breach</div>
</div>
<div class="a t" style="top:529.83px;font-size:8px;color:#4a4a4a;font-weight:normal;font-style:normal;left:571px;">Cybersecurity</div>
<div class="a t" style="top:529.66px;font-size:8.2px;color:#333;font-weight:bold;font-style:normal;left:250.5px;width:800px;text-align:center;">20</div>
<div class="a" style="left:678px;top:521px;width:24px;height:24px;overflow:hidden">
<div class="a t" style="top:3.58px;font-size:8px;color:#4a4a4a;font-weight:normal;font-style:normal;left:-387.7px;width:800px;text-align:center;">Critic</div>
</div>
<div class="a" style="left:678px;top:521px;width:24px;height:24px;overflow:hidden">
<div class="a t" style="top:14.08px;font-size:8px;color:#4a4a4a;font-weight:normal;font-style:normal;left:-387.7px;width:800px;text-align:center;">al</div>
</div>
<div class="a t" style="top:529.91px;font-size:7.9px;color:#4a4a4a;font-weight:normal;font-style:normal;left:324.5px;width:800px;text-align:center;">In Progress</div>
<div class="a t" style="top:529.83px;font-size:8px;color:#4a4a4a;font-weight:normal;font-style:normal;left:748px;">John Smith</div>
<div class="a t" style="top:530.34px;font-size:7.4px;color:#4a4a4a;font-weight:normal;font-style:normal;left:866px;">2024-03-31</div>
<div class="a t" style="top:553.65px;font-size:8.8px;color:#fff;font-weight:bold;font-style:normal;left:34.5px;width:800px;text-align:center;">2</div>
<div class="a t" style="top:553.91px;font-size:7.9px;color:#333;font-weight:bold;font-style:normal;left:88.5px;width:800px;text-align:center;">R-001</div>
<div class="a" style="left:516px;top:545px;width:53px;height:24px;overflow:hidden">
<div class="a t" style="top:8.83px;font-size:8px;color:#4a4a4a;font-weight:normal;font-style:normal;left:1.6px;">Data Breach</div>
</div>
<div class="a t" style="top:553.83px;font-size:8px;color:#4a4a4a;font-weight:normal;font-style:normal;left:571px;">Cybersecurity</div>
<div class="a t" style="top:553.66px;font-size:8.2px;color:#333;font-weight:bold;font-style:normal;left:250.5px;width:800px;text-align:center;">20</div>
<div class="a" style="left:678px;top:545px;width:24px;height:24px;overflow:hidden">
<div class="a t" style="top:3.58px;font-size:8px;color:#4a4a4a;font-weight:normal;font-style:normal;left:-387.7px;width:800px;text-align:center;">Critic</div>
</div>
<div class="a" style="left:678px;top:545px;width:24px;height:24px;overflow:hidden">
<div class="a t" style="top:14.08px;font-size:8px;color:#4a4a4a;font-weight:normal;font-style:normal;left:-387.7px;width:800px;text-align:center;">al</div>
</div>
<div class="a t" style="top:553.91px;font-size:7.9px;color:#4a4a4a;font-weight:normal;font-style:normal;left:324.5px;width:800px;text-align:center;">In Progress</div>
<div class="a t" style="top:553.83px;font-size:8px;color:#4a4a4a;font-weight:normal;font-style:normal;left:748px;">John Smith</div>
<div class="a t" style="top:554.34px;font-size:7.4px;color:#4a4a4a;font-weight:normal;font-style:normal;left:866px;">2024-03-31</div>
<div class="a t" style="top:577.65px;font-size:8.8px;color:#fff;font-weight:bold;font-style:normal;left:34.5px;width:800px;text-align:center;">3</div>
<div class="a t" style="top:577.91px;font-size:7.9px;color:#333;font-weight:bold;font-style:normal;left:88.5px;width:800px;text-align:center;">R-003</div>
<div class="a" style="left:516px;top:569px;width:53px;height:24px;overflow:hidden">
<div class="a t" style="top:-1.67px;font-size:8px;color:#4a4a4a;font-weight:normal;font-style:normal;left:1.6px;">Regulatory</div>
</div>
<div class="a" style="left:516px;top:569px;width:53px;height:24px;overflow:hidden">
<div class="a t" style="top:8.83px;font-size:8px;color:#4a4a4a;font-weight:normal;font-style:normal;left:1.6px;">Non-</div>
</div>
<div class="a" style="left:516px;top:569px;width:53px;height:24px;overflow:hidden">
<div class="a t" style="top:19.33px;font-size:8px;color:#4a4a4a;font-weight:normal;font-style:normal;left:1.6px;">Compliance</div>
</div>
<div class="a t" style="top:577.83px;font-size:8px;color:#4a4a4a;font-weight:normal;font-style:normal;left:571px;">Compliance</div>
<div class="a t" style="top:577.66px;font-size:8.2px;color:#333;font-weight:bold;font-style:normal;left:250.5px;width:800px;text-align:center;">16</div>
<div class="a" style="left:678px;top:569px;width:24px;height:24px;overflow:hidden">
<div class="a t" style="top:8.83px;font-size:8px;color:#4a4a4a;font-weight:normal;font-style:normal;left:-387.7px;width:800px;text-align:center;">High</div>
</div>
<div class="a t" style="top:577.91px;font-size:7.9px;color:#4a4a4a;font-weight:normal;font-style:normal;left:324.5px;width:800px;text-align:center;">In Progress</div>
<div class="a t" style="top:577.83px;font-size:8px;color:#4a4a4a;font-weight:normal;font-style:normal;left:748px;">Michael Brown</div>
<div class="a t" style="top:578.34px;font-size:7.4px;color:#4a4a4a;font-weight:normal;font-style:normal;left:866px;">2024-02-28</div>
<div class="a t" style="top:601.65px;font-size:8.8px;color:#fff;font-weight:bold;font-style:normal;left:34.5px;width:800px;text-align:center;">4</div>
<div class="a t" style="top:601.91px;font-size:7.9px;color:#333;font-weight:bold;font-style:normal;left:88.5px;width:800px;text-align:center;">R-008</div>
<div class="a" style="left:516px;top:593px;width:53px;height:24px;overflow:hidden">
<div class="a t" style="top:3.58px;font-size:8px;color:#4a4a4a;font-weight:normal;font-style:normal;left:1.6px;">Ransomware</div>
</div>
<div class="a" style="left:516px;top:593px;width:53px;height:24px;overflow:hidden">
<div class="a t" style="top:14.08px;font-size:8px;color:#4a4a4a;font-weight:normal;font-style:normal;left:1.6px;">Attack</div>
</div>
<div class="a t" style="top:601.83px;font-size:8px;color:#4a4a4a;font-weight:normal;font-style:normal;left:571px;">Cybersecurity</div>
<div class="a t" style="top:601.66px;font-size:8.2px;color:#333;font-weight:bold;font-style:normal;left:250.5px;width:800px;text-align:center;">15</div>
<div class="a" style="left:678px;top:593px;width:24px;height:24px;overflow:hidden">
<div class="a t" style="top:8.83px;font-size:8px;color:#4a4a4a;font-weight:normal;font-style:normal;left:-387.7px;width:800px;text-align:center;">High</div>
</div>
<div class="a t" style="top:601.91px;font-size:7.9px;color:#4a4a4a;font-weight:normal;font-style:normal;left:324.5px;width:800px;text-align:center;">In Progress</div>
<div class="a t" style="top:601.83px;font-size:8px;color:#4a4a4a;font-weight:normal;font-style:normal;left:748px;">John Smith</div>
<div class="a t" style="top:602.34px;font-size:7.4px;color:#4a4a4a;font-weight:normal;font-style:normal;left:866px;">2024-02-15</div>
<div class="a t" style="top:626.15px;font-size:8.8px;color:#fff;font-weight:bold;font-style:normal;left:34.5px;width:800px;text-align:center;">5</div>
<div class="a t" style="top:625.81px;font-size:7.9px;color:#333;font-weight:bold;font-style:normal;left:88.5px;width:800px;text-align:center;">R-002</div>
<div class="a" style="left:516px;top:617px;width:53px;height:13px;overflow:hidden">
<div class="a t" style="top:2.53px;font-size:8px;color:#4a4a4a;font-weight:normal;font-style:normal;left:1.6px;">Supply Chain</div>
</div>
<div class="a" style="left:516px;top:617px;width:53px;height:13px;overflow:hidden">
<div class="a t" style="top:13.53px;font-size:8px;color:#4a4a4a;font-weight:normal;font-style:normal;left:1.6px;">Disruption</div>
</div>
<div class="a t" style="top:625.73px;font-size:8px;color:#4a4a4a;font-weight:normal;font-style:normal;left:571px;">Supply Chain</div>
<div class="a t" style="top:625.56px;font-size:8.2px;color:#333;font-weight:bold;font-style:normal;left:250.5px;width:800px;text-align:center;">12</div>
<div class="a" style="left:678px;top:617px;width:24px;height:13px;overflow:hidden">
<div class="a t" style="top:2.53px;font-size:8px;color:#4a4a4a;font-weight:normal;font-style:normal;left:-387.7px;width:800px;text-align:center;">Medi</div>
</div>
<div class="a" style="left:678px;top:617px;width:24px;height:13px;overflow:hidden">
<div class="a t" style="top:13.23px;font-size:8px;color:#4a4a4a;font-weight:normal;font-style:normal;left:-387.7px;width:800px;text-align:center;">um</div>
</div>
<div class="a t" style="top:625.81px;font-size:7.9px;color:#4a4a4a;font-weight:normal;font-style:normal;left:324.5px;width:800px;text-align:center;">Open</div>
<div class="a t" style="top:625.73px;font-size:8px;color:#4a4a4a;font-weight:normal;font-style:normal;left:748px;">Sarah Johnson</div>
<div class="a t" style="top:626.24px;font-size:7.4px;color:#4a4a4a;font-weight:normal;font-style:normal;left:866px;">2024-04-15</div>
</div>
<div class="a t" style="top:606.45px;font-size:19.9px;color:rgba(120,120,120,0.36);font-weight:normal;font-style:normal;left:991.5px;">Activate Windows</div>
<div class="a t" style="top:631.89px;font-size:14.9px;color:rgba(120,120,120,0.36);font-weight:normal;font-style:normal;left:991.5px;">Go to Settings to activate Windows.</div>
</body></html>
